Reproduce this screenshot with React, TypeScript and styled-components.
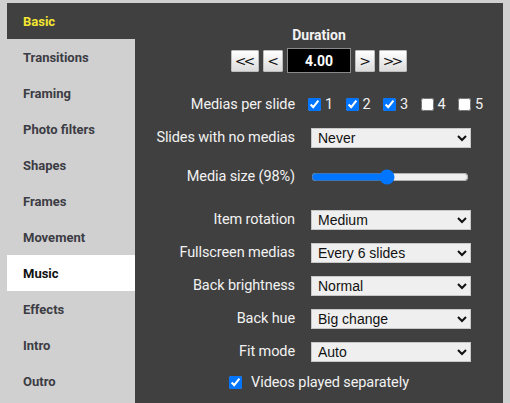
import styled, { createGlobalStyle } from 'styled-components'

const GlobalStyle = createGlobalStyle`
  html, body {
    margin: 0;
    padding: 0;
    background: #d0d0d0;
    overflow: hidden;
  }
`

const menu = [
  'Basic',
  'Transitions',
  'Framing',
  'Photo filters',
  'Shapes',
  'Frames',
  'Movement',
  'Music',
  'Effects',
  'Intro',
  'Outro',
]

const Page = styled.div`
  display: flex;
  padding: 3px 7px 0 7px;
  height: 403px;
  box-sizing: border-box;
  font-family: Roboto, 'Liberation Sans', sans-serif;
`

const Sidebar = styled.div`
  width: 128px;
  display: flex;
  flex-direction: column;
`

const Tab = styled.div<{ $state?: 'active' | 'current' }>`
  height: 36px;
  display: flex;
  align-items: center;
  padding-left: 16px;
  font-size: 13px;
  font-weight: 700;
  color: ${(p) =>
    p.$state === 'active' ? '#f4e631' : p.$state === 'current' ? '#111' : '#3c3c44'};
  background: ${(p) =>
    p.$state === 'active' ? '#404040' : p.$state === 'current' ? '#fff' : 'transparent'};
`

const Panel = styled.div`
  flex: 1;
  background: #404040;
  color: #f2f2f2;
  display: flex;
  flex-direction: column;
`

const Title = styled.div`
  text-align: center;
  font-size: 14px;
  font-weight: 700;
  margin-top: 23px;
  line-height: 18px;
`

const Stepper = styled.div`
  display: flex;
  justify-content: center;
  align-items: center;
  gap: 4px;
  margin-top: 4px;
`

const StepButton = styled.button<{ $wide?: boolean }>`
  width: ${(p) => (p.$wide ? 28 : 20)}px;
  height: 22px;
  padding: 0;
  border: 1px solid #bdbdbd;
  border-radius: 1px;
  background: linear-gradient(#ffffff, #dcdcdc);
  color: #111;
  font-family: 'DejaVu Sans', sans-serif;
  font-size: 14px;
  letter-spacing: -3px;
  line-height: 20px;
  text-indent: -3px;
`

const Value = styled.div`
  width: 64px;
  height: 25px;
  box-sizing: border-box;
  background: #000;
  border: 1px solid #8a8a8a;
  color: #fff;
  font-size: 14px;
  font-weight: 700;
  display: flex;
  align-items: center;
  justify-content: center;
`

const Rows = styled.div`
  display: flex;
  flex-direction: column;
  margin-top: 15px;
`

const Row = styled.div<{ $space?: string }>`
  display: flex;
  align-items: center;
  height: 33px;
  gap: 16px;
  margin: ${(p) => p.$space || '0'};
`

const Label = styled.div`
  width: 160px;
  text-align: right;
  font-size: 14.5px;
  font-weight: 400;
  letter-spacing: -0.1px;
`

const Options = styled.div`
  display: flex;
  margin-left: -3px;
`

const Option = styled.label`
  width: 37.5px;
  display: flex;
  align-items: center;
  gap: 4px;
  font-size: 14.5px;
`

const Check = styled.input.attrs({ type: 'checkbox' })`
  margin: 0;
  width: 13px;
  height: 13px;
`

const Select = styled.select`
  width: 160px;
  height: 20px;
  padding: 0 2px;
  font-family: 'Liberation Sans', Arial, sans-serif;
  font-size: 14px;
  color: #111;
  background-color: #efefef;
  border: 1px solid #c8c8c8;
  border-radius: 0;
`

const Range = styled.input.attrs({ type: 'range' })`
  width: 158px;
  margin: 0;
`

const CenterRow = styled.label`
  display: flex;
  justify-content: center;
  align-items: center;
  gap: 9px;
  height: 28px;
  font-size: 14.5px;
  letter-spacing: -0.1px;
`

const selects: [string, string][] = [
  ['Item rotation', 'Medium'],
  ['Fullscreen medias', 'Every 6 slides'],
  ['Back brightness', 'Normal'],
  ['Back hue', 'Big change'],
  ['Fit mode', 'Auto'],
]

export default function App() {
  return (
    <Page>
      <GlobalStyle />
      <Sidebar>
        {menu.map((m) => (
          <Tab key={m} $state={m === 'Basic' ? 'active' : m === 'Music' ? 'current' : undefined}>
            {m}
          </Tab>
        ))}
      </Sidebar>
      <Panel>
        <Title>Duration</Title>
        <Stepper>
          <StepButton $wide>&lt;&lt;</StepButton>
          <StepButton>&lt;</StepButton>
          <Value>4.00</Value>
          <StepButton>&gt;</StepButton>
          <StepButton $wide>&gt;&gt;</StepButton>
        </Stepper>
        <Rows>
          <Row>
            <Label>Medias per slide</Label>
            <Options>
              {[1, 2, 3, 4, 5].map((n) => (
                <Option key={n}>
                  <Check defaultChecked={n <= 3} />
                  {n}
                </Option>
              ))}
            </Options>
          </Row>
          <Row>
            <Label>Slides with no medias</Label>
            <Select defaultValue="Never">
              <option>Never</option>
            </Select>
          </Row>
          <Row $space="6px 0 10px">
            <Label>Media size (98%)</Label>
            <Range defaultValue={48} />
          </Row>
          {selects.map(([label, value]) => (
            <Row key={label}>
              <Label>{label}</Label>
              <Select defaultValue={value}>
                <option>{value}</option>
              </Select>
            </Row>
          ))}
          <CenterRow>
            <Check defaultChecked />
            Videos played separately
          </CenterRow>
        </Rows>
      </Panel>
    </Page>
  )
}
